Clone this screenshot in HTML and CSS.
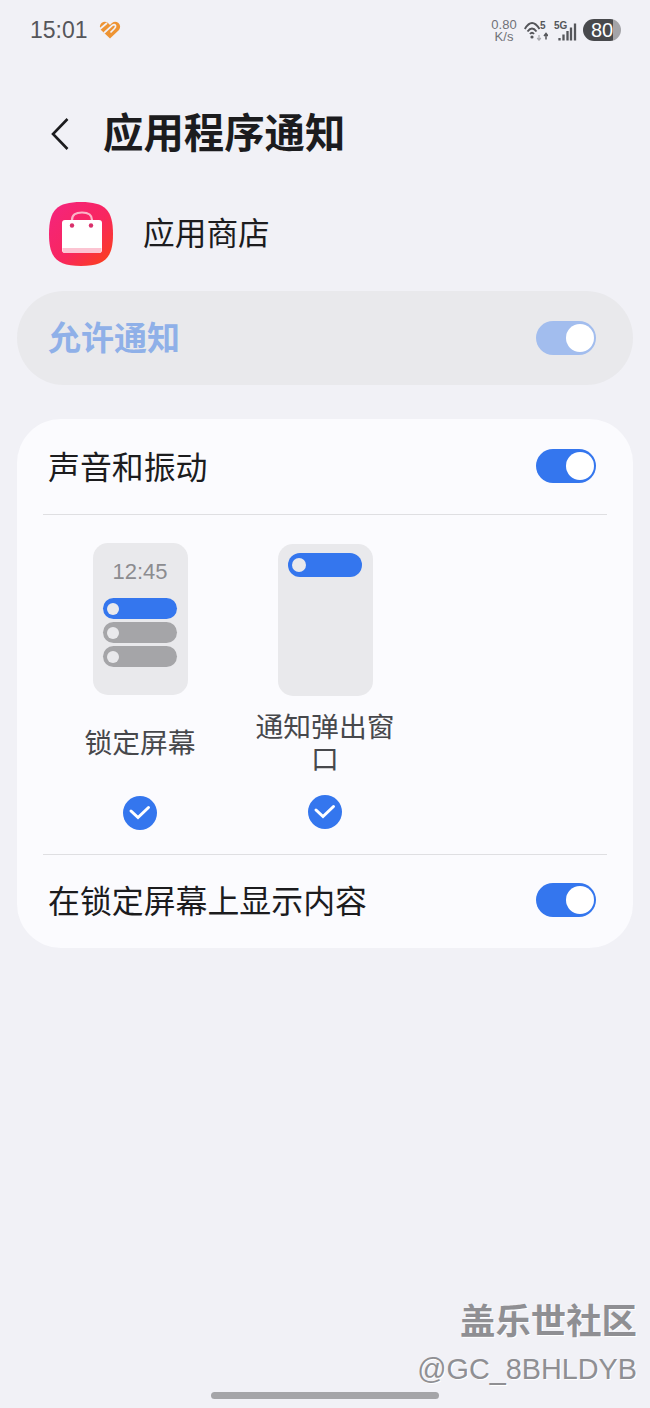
FILE: index.html
```html
<!DOCTYPE html>
<html lang="zh-CN">
<head>
    <meta charset="UTF-8">
    <meta name="viewport" content="width=device-width, initial-scale=1.0">
    <title>应用程序通知</title>
    <link rel="stylesheet" href="styles.css">
</head>
<body>

    <div class="status-bar">
        <div class="status-left">
            <span class="clock">15:01</span>
            <svg class="heart" width="22" height="18" viewBox="0 0 22 18">
                <path d="M11 17.5 L2 9 Q-0.5 5 2.5 2 Q6 -0.5 9 2 L11 4 L13 2 Q16 -0.5 19.5 2 Q22.5 5 20 9 Z" fill="#ee9433"/>
                <path d="M1 8 L8 2 M5 12 L13.5 4.2 Q15.5 3 16.5 4.5 Q17 6 15.5 7.5 L11.5 11.5" stroke="#f1f1f6" stroke-width="1.7" fill="none"/>
            </svg>
        </div>
        <div class="status-right">
            <div class="speed"><span>0.80</span><span>K/s</span></div>
            <svg class="wifi" width="24" height="20" viewBox="0 0 24 20">
                <path d="M0.8 8 Q8 -4 15.5 8 M3.5 10.5 Q8 4.5 12.5 10.5 M6 13 Q8 10.5 10 13" stroke="#55565a" stroke-width="1.9" fill="none"/>
                <circle cx="8" cy="16" r="1.6" fill="#55565a"/>
                <path d="M15 14 V19 M13.2 17 L15 19.2 L16.8 17" stroke="#a9a9ad" stroke-width="1.2" fill="none"/>
                <path d="M22 18.5 V13 M20 15 L22 12.5 L24 15" stroke="#55565a" stroke-width="1.5" fill="none"/>
            </svg>
            <span class="wifi-num">5</span>
            <div class="signal">
                <span class="five-g">5G</span>
                <svg width="19" height="18" viewBox="0 0 19 18">
                    <path d="M1.5 15 V17.5 M5.5 11.5 V17.5 M9.5 8 V17.5 M13 4.5 V17.5 M17 0.5 V17.5" stroke="#55565a" stroke-width="2.3" fill="none"/>
                </svg>
            </div>
            <div class="battery"><span>80</span></div>
        </div>
    </div>

    <div class="page-header">
        <svg class="back" width="20" height="34" viewBox="0 0 20 34">
            <path d="M17.5 2 L3 17 L17.5 32" stroke="#1c1c1e" stroke-width="2.6" fill="none"/>
        </svg>
        <h1 class="page-title">应用程序通知</h1>
    </div>

    <div class="app-row">
        <svg class="app-icon" width="64" height="64" viewBox="0 0 64 64">
            <defs>
                <linearGradient id="appGrad" x1="0" y1="0" x2="1" y2="1">
                    <stop offset="0" stop-color="#f4247f"/>
                    <stop offset="0.55" stop-color="#f8265f"/>
                    <stop offset="1" stop-color="#fb4412"/>
                </linearGradient>
            </defs>
            <path d="M32 0 C56 0 64 8 64 32 C64 56 56 64 32 64 C8 64 0 56 0 32 C0 8 8 0 32 0 Z" fill="url(#appGrad)"/>
            <path d="M23 20 V18 Q23 10.5 33 10.5 Q43 10.5 43 18 V20" stroke="#fbb5c8" stroke-width="2.2" fill="none"/>
            <path d="M16 18 H50 Q53 18 53 21 V48 Q53 51 50 51 H16 Q13 51 13 48 V21 Q13 18 16 18 Z" fill="#ffffff"/>
            <path d="M13.5 46 H52.5 L52.5 48 Q52 51 50 51 H16 Q14 51 13.5 48 Z" fill="#fcc4d2"/>
            <circle cx="23" cy="23.5" r="2.2" fill="#d9306b"/>
            <circle cx="42" cy="23.5" r="2.2" fill="#d9306b"/>
        </svg>
        <span class="app-name">应用商店</span>
    </div>

    <div class="master-row">
        <span class="master-label">允许通知</span>
        <div class="toggle toggle-dim"><span class="knob"></span></div>
    </div>

    <div class="card">
        <div class="row">
            <span class="row-label">声音和振动</span>
            <div class="toggle"><span class="knob"></span></div>
        </div>

        <div class="previews">
            <div class="preview">
                <div class="phone">
                    <span class="phone-time">12:45</span>
                    <div class="pill pill-on"><span class="dot"></span></div>
                    <div class="pill"><span class="dot"></span></div>
                    <div class="pill"><span class="dot"></span></div>
                </div>
                <div class="preview-label">锁定屏幕</div>
                <svg class="check" width="34" height="34" viewBox="0 0 34 34">
                    <circle cx="17" cy="17" r="17" fill="#3476ee"/>
                    <path d="M8 15 L15 21.5 L25.5 11.5" stroke="#ffffff" stroke-width="3" stroke-linecap="round" fill="none"/>
                </svg>
            </div>
            <div class="preview preview-popup">
                <div class="phone phone-popup">
                    <div class="pill pill-on"><span class="dot"></span></div>
                </div>
                <div class="preview-label">通知弹出窗口</div>
                <svg class="check" width="34" height="34" viewBox="0 0 34 34">
                    <circle cx="17" cy="17" r="17" fill="#3476ee"/>
                    <path d="M8 15 L15 21.5 L25.5 11.5" stroke="#ffffff" stroke-width="3" stroke-linecap="round" fill="none"/>
                </svg>
            </div>
        </div>

        <div class="row row-last">
            <span class="row-label">在锁定屏幕上显示内容</span>
            <div class="toggle"><span class="knob"></span></div>
        </div>
    </div>

    <div class="watermark">
        <div class="wm-name">盖乐世社区</div>
        <div class="wm-user">@GC_8BHLDYB</div>
    </div>
    <div class="home-bar"></div>

</body>
</html>
```

FILE: styles.css
```css
* {
    box-sizing: border-box;
}
body {
    position: relative;
    width: 650px;
    height: 1408px;
    margin: 0;
    overflow: hidden;
    background-color: #f1f1f6;
    color: #1c1c1e;
    font-family: "Liberation Sans", "Noto Sans CJK SC", sans-serif;
}

/* status bar */
.status-bar {
    display: flex;
    justify-content: space-between;
    align-items: center;
    height: 60px;
    padding: 2px 29px 0 30px;
    color: #55565a;
}
.status-left {
    display: flex;
    align-items: center;
    gap: 11px;
    margin-top: -2px;
}
.clock {
    font-size: 23px;
}
.status-right {
    position: relative;
    display: flex;
    align-items: center;
}
.speed {
    display: flex;
    flex-direction: column;
    align-items: center;
    width: 28px;
    margin-right: 6px;
    font-size: 13px;
    line-height: 12px;
    color: #707176;
}
.wifi-num {
    position: absolute;
    left: 50px;
    top: 1px;
    font-size: 10px;
    line-height: 12px;
    font-weight: bold;
}
.wifi {
    margin-right: 6px;
}
.signal {
    position: relative;
    width: 23px;
    height: 20px;
    margin-right: 6px;
    display: flex;
    align-items: flex-end;
    justify-content: flex-end;
}
.five-g {
    position: absolute;
    left: 0;
    top: 0;
    font-size: 10px;
    line-height: 10px;
    font-weight: bold;
}
.battery {
    width: 38px;
    height: 22px;
    margin-top: -2px;
    border-radius: 11px;
    background: linear-gradient(to right, #48494c 0 78%, #a4a4a8 78%);
    color: #ffffff;
    font-size: 20px;
    line-height: 22px;
    text-align: center;
}

/* header */
.page-header {
    display: flex;
    align-items: center;
    gap: 33px;
    height: 56px;
    margin-top: 46px;
    padding-left: 50px;
}
.page-title {
    margin: 0;
    font-size: 40.4px;
    font-weight: bold;
    line-height: 56px;
}

/* app row */
.app-row {
    display: flex;
    align-items: center;
    gap: 30px;
    margin-top: 40px;
    padding-left: 49px;
}
.app-name {
    padding-bottom: 7px;
    font-size: 31.7px;
}

/* allow notifications */
.master-row {
    display: flex;
    justify-content: space-between;
    align-items: center;
    height: 94px;
    margin: 25px 17px 0;
    padding: 0 37px 0 31px;
    border-radius: 47px;
    background-color: #e9e9ec;
}
.master-label {
    padding-bottom: 4px;
    font-size: 33px;
    font-weight: bold;
    color: #8fb0e8;
}

/* toggles */
.toggle {
    display: flex;
    justify-content: flex-end;
    align-items: center;
    width: 60px;
    height: 34px;
    padding-right: 2px;
    border-radius: 17px;
    background-color: #3476ee;
}
.toggle-dim {
    background-color: #a2bdee;
}
.knob {
    width: 28px;
    height: 28px;
    border-radius: 50%;
    background-color: #ffffff;
}

/* card */
.card {
    height: 529px;
    margin: 34px 17px 0;
    padding: 0 26px;
    border-radius: 44px;
    background-color: #fbfbfe;
}
.row {
    display: flex;
    justify-content: space-between;
    align-items: center;
    height: 96px;
    padding: 0 11px 2px 5px;
    border-bottom: 1px solid #dfdfe2;
}
.row-last {
    height: 93px;
    padding-bottom: 3px;
    border-bottom: none;
}
.row-label {
    padding-bottom: 2px;
    font-size: 31.9px;
}
.previews {
    display: flex;
    gap: 45px;
    height: 340px;
    border-bottom: 1px solid #dfdfe2;
}
.preview {
    display: flex;
    flex-direction: column;
    align-items: center;
    width: 140px;
    margin-left: 27px;
    padding-top: 28px;
}
.preview-popup {
    margin-left: 0;
}
.phone {
    display: flex;
    flex-direction: column;
    align-items: center;
    gap: 3px;
    width: 95px;
    height: 152px;
    padding-top: 14px;
    border-radius: 15px;
    background-color: #e9e9ec;
}
.phone-time {
    margin-bottom: 8px;
    font-size: 22px;
    line-height: 30px;
    color: #8c8c90;
}
.phone-popup {
    margin-top: 1px;
    padding-top: 9px;
}
.pill {
    display: flex;
    align-items: center;
    width: 74px;
    height: 21px;
    padding-left: 4px;
    border-radius: 11px;
    background-color: #a5a5a8;
}
.pill-on {
    background-color: #3476ee;
}
.phone-popup .pill {
    height: 24px;
    border-radius: 12px;
}
.dot {
    width: 12px;
    height: 12px;
    border-radius: 50%;
    background-color: #e9e9ec;
}
.phone-popup .dot {
    width: 14px;
    height: 14px;
}
.preview-label {
    display: flex;
    align-items: center;
    justify-content: center;
    width: 140px;
    height: 66px;
    margin-top: 16px;
    font-size: 27.8px;
    line-height: 32px;
    text-align: center;
    color: #47484c;
}
.preview-popup .preview-label {
    margin-top: 15px;
}
.check {
    margin-top: 19px;
}
.preview-popup .check {
    margin-top: 18px;
}

/* overlays */
.watermark {
    position: absolute;
    right: 13px;
    top: 1298px;
    text-align: right;
    color: #8f8f93;
    text-shadow: 1px 1px 0 #ffffff;
}
.wm-name {
    font-size: 35.4px;
    font-weight: bold;
    line-height: 48px;
}
.wm-user {
    margin-top: 6px;
    font-size: 28.8px;
    line-height: 34px;
}
.home-bar {
    position: absolute;
    left: 211px;
    top: 1392px;
    width: 228px;
    height: 7px;
    border-radius: 4px;
    background-color: #a5a5a8;
}
```
